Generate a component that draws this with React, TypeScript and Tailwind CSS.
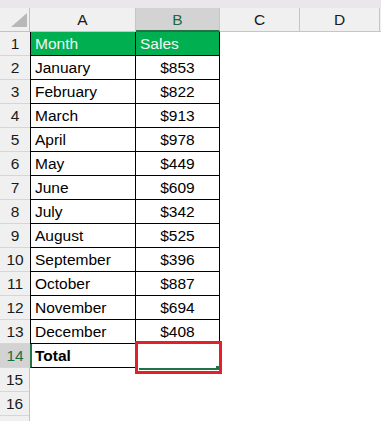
import React from 'react';

const rows: [string, string][] = [
    ['January', '$853'],
    ['February', '$822'],
    ['March', '$913'],
    ['April', '$978'],
    ['May', '$449'],
    ['June', '$609'],
    ['July', '$342'],
    ['August', '$525'],
    ['September', '$396'],
    ['October', '$887'],
    ['November', '$694'],
    ['December', '$408'],
];

function RowHead({ n, active, edge }: { n?: number; active?: boolean; edge?: boolean }) {
    return (
        <div
            className={
                'w-[30px] h-full shrink-0 flex items-center justify-center pt-[1px] border-b border-[#d6d6d6] ' +
                (active ? 'bg-[#d3d3d3] text-[#1e6b40]' : 'bg-[#f0f0f0] text-[#1a1a1a]') +
                (edge ? ' border-r border-r-[#c2c2c2]' : '')
            }
        >
            {n}
        </div>
    );
}

export default function App() {
    return (
        <div
            className="w-[381px] h-[421px] bg-white overflow-hidden text-[15.5px] leading-none text-black"
            style={{ fontFamily: '"Liberation Sans", Arial, sans-serif' }}
        >
            {/* top strip */}
            <div className="h-[8px] bg-[#ebe6e9]" />

            {/* column headers */}
            <div className="flex h-[24px] bg-[#f0f0f0] text-[#1a1a1a]">
                <div className="w-[30px] shrink-0 border-r border-b border-[#c2c2c2] relative">
                    <svg className="absolute left-[11px] top-[5px]" width="16" height="14" viewBox="0 0 16 14">
                        <polygon points="0,14 16,14 16,0" fill="#b8b8b8" />
                    </svg>
                </div>
                <div className="w-[106px] shrink-0 border-r border-b border-[#c6c6c6] flex items-center justify-center pt-[1px]">A</div>
                <div className="w-[84px] shrink-0 border-r border-[#c6c6c6] border-b-2 border-b-[#217346] bg-[#d3d3d3] text-[#1e6b40] flex items-center justify-center pt-[2px]">
                    B
                </div>
                <div className="w-[80px] shrink-0 border-r border-b border-[#c6c6c6] flex items-center justify-center pt-[1px]">C</div>
                <div className="w-[80px] shrink-0 border-r border-b border-[#c6c6c6] flex items-center justify-center pt-[1px]">D</div>
                <div className="flex-1 border-b border-[#c6c6c6]" />
            </div>

            {/* header row */}
            <div className="flex h-[24px]">
                <RowHead n={1} />
                <div className="w-[106px] shrink-0 bg-[#00b050] text-[#f4f4f4] border-l border-r border-b border-black flex items-center pl-[4px] pt-[1px]">
                    Month
                </div>
                <div className="w-[84px] shrink-0 bg-[#00b050] text-[#f4f4f4] border-r border-b border-black flex items-center pl-[4px] pt-[1px]">
                    Sales
                </div>
            </div>

            {rows.map(([month, sales], i) => (
                <div key={month} className="flex h-[24px]">
                    <RowHead n={i + 2} />
                    <div className="w-[106px] shrink-0 border-l border-r border-b border-black flex items-center pl-[4px] pt-[1px]">{month}</div>
                    <div className="w-[84px] shrink-0 border-r border-b border-black flex items-center justify-center pt-[1px]">{sales}</div>
                </div>
            ))}

            {/* total row */}
            <div className="flex h-[24px]">
                <RowHead n={14} active />
                <div className="w-[106px] shrink-0 border-l-2 border-l-[#217346] border-r border-b border-black flex items-center pl-[3px] pt-[1px] font-bold">
                    Total
                </div>
                <div className="w-[84px] shrink-0 relative">
                    <div className="absolute left-[-1px] top-[-3px] w-[87px] h-[33px] border-[3px] border-[#e3202a] z-10" />
                    <div className="absolute left-[3px] top-[24px] w-[77px] h-[2px] bg-[#217346] z-10" />
                    <div className="absolute left-[80px] top-[22px] w-[3px] h-[4px] bg-[#217346] z-10" />
                </div>
            </div>

            <div className="flex h-[24px]">
                <RowHead n={15} edge />
            </div>
            <div className="flex h-[24px]">
                <RowHead n={16} edge />
            </div>
            <div className="flex h-[24px]">
                <RowHead edge />
            </div>
        </div>
    );
}
